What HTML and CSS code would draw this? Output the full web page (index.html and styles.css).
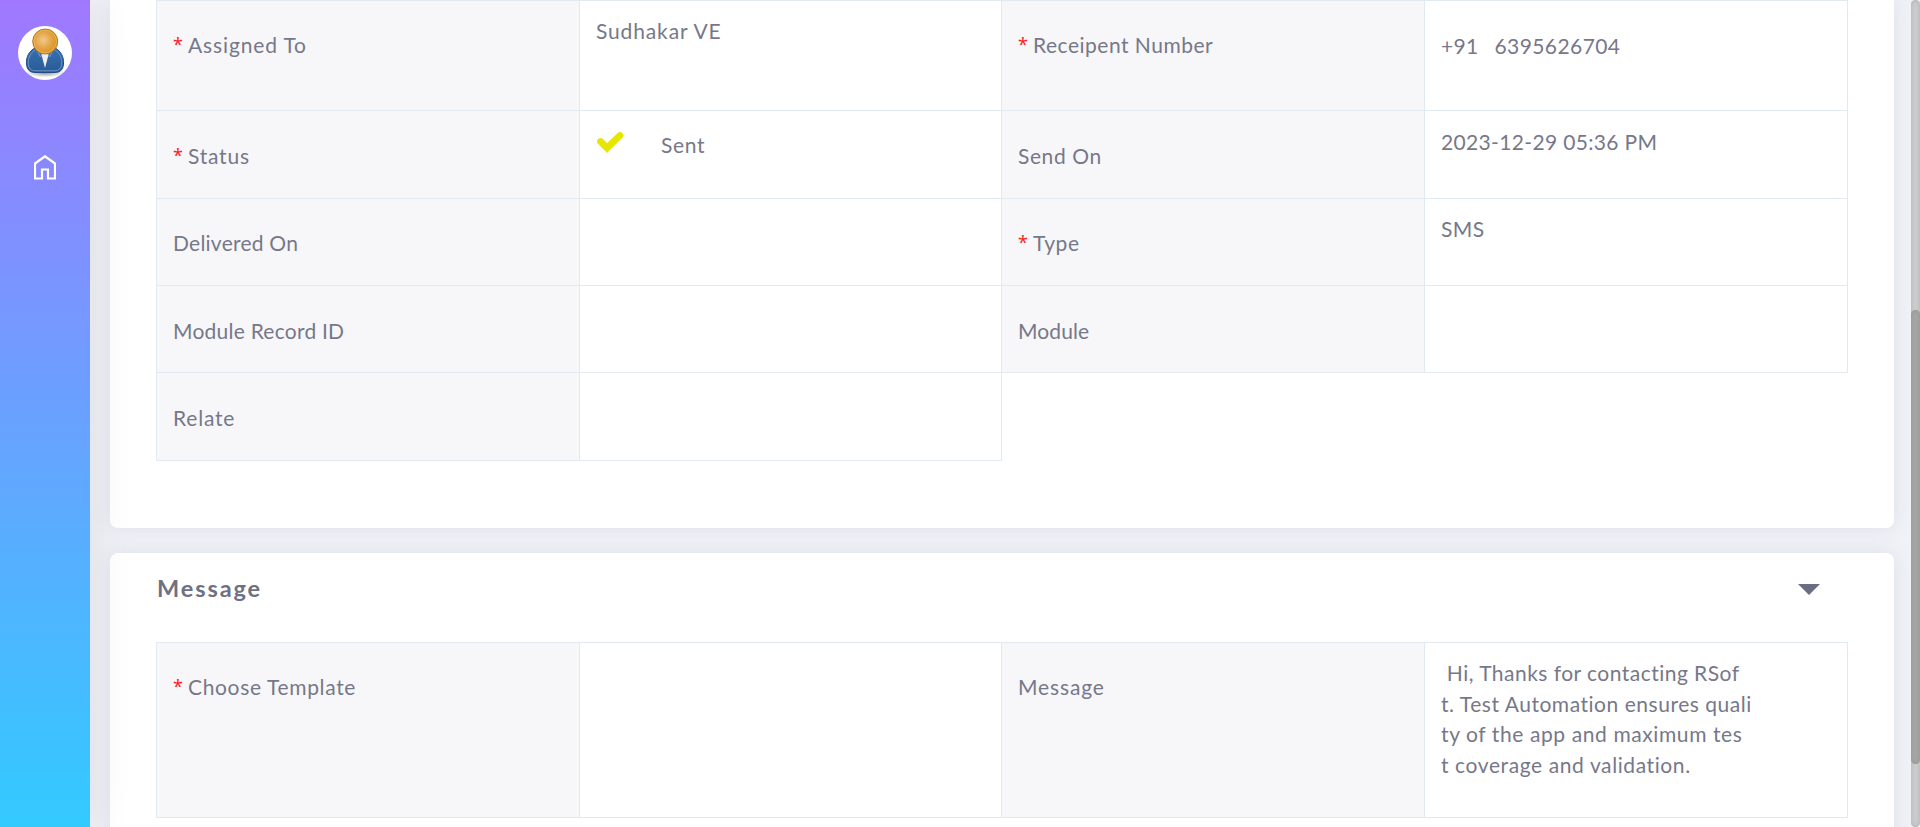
FILE: index.html
```html
<!DOCTYPE html>
<html lang="en">
<head>
<meta charset="utf-8">
<title>SMS details</title>
<link rel="stylesheet" href="styles.css">
</head>
<body>
<div class="app">
  <aside class="sidebar">
    <div class="avatar">
      <svg width="54" height="54" viewBox="0 0 54 54">
        <defs>
          <radialGradient id="head" cx=".42" cy=".45" r=".6"><stop offset="0" stop-color="#f0c88c"/><stop offset=".55" stop-color="#e3a544"/><stop offset="1" stop-color="#d6901d"/></radialGradient>
          <linearGradient id="coat" x1="0" y1="0" x2="0" y2="1"><stop offset="0" stop-color="#3970b0"/><stop offset="1" stop-color="#285b96"/></linearGradient>
          <radialGradient id="shade"><stop offset="0" stop-color="#555" stop-opacity=".7"/><stop offset="1" stop-color="#777" stop-opacity="0"/></radialGradient>
        </defs>
        <ellipse cx="27" cy="46.500" rx="20" ry="5" fill="url(#shade)"/>
        <path d="M17 22C11 25 8 31 8.500 38Q9 46.500 17 46.500H37Q45 46.500 45.500 38C46 31 43 25 37 22Z" fill="url(#coat)" stroke="#204a87" stroke-width="1"/>
        <path d="M17 24C12 27 10 32 10.300 38Q11 44.800 17 44.800H37Q43 44.800 43.700 38C44 32 42 27 37 24" fill="none" stroke="#6c94c4" stroke-width="1"/>
        <path d="M23 27L27 42L31 27Z" fill="#eef0f2"/>
        <path d="M20 26L22.500 31L24 28M34 26L31.500 31L30 28" fill="none" stroke="#7f9dc0"/>
        <circle cx="27.200" cy="15.500" r="12.500" fill="url(#head)" stroke="#b9770c" stroke-width="1"/>
        <circle cx="27.200" cy="15.500" r="11.300" fill="none" stroke="#edb965" stroke-width=".8"/>
      </svg>
    </div>
    <svg class="home" width="22" height="25" viewBox="0 0 22 25"><path d="M1 23.500V8.500L11 1.300L21 8.500V23.500H14V14.500H8V23.500Z" fill="none" stroke="#fff" stroke-width="2.200"/></svg>
  </aside>
  <main class="content">
    <section class="card card-details">
      <div class="fields">
        <div class="label up"><span class="req">*</span><span class="t-assigned">Assigned To</span></div>
        <div class="value up"><span class="t-owner">Sudhakar VE</span></div>
        <div class="label up"><span class="req">*</span><span class="t-number">Receipent Number</span></div>
        <div class="value last phone"><span class="t-code">+91</span><span class="t-phone">6395626704</span></div>

        <div class="label"><span class="req">*</span><span class="t-status">Status</span></div>
        <div class="value sent"><svg width="29" height="22" viewBox="0 0 29 22"><path d="M4.500 10.500L11 17L24 4.500" fill="none" stroke="#e6e600" stroke-width="6.800" stroke-linecap="round"/><path d="M7 14.500L11.200 22L15.500 14.500Z" fill="#e6e600"/></svg><span class="t-sent">Sent</span></div>
        <div class="label"><span class="t-sendon">Send On</span></div>
        <div class="value last"><span class="t-date">2023-12-29 05:36 PM</span></div>

        <div class="label up"><span class="t-delivered">Delivered On</span></div>
        <div class="value"></div>
        <div class="label up"><span class="req">*</span><span class="t-type">Type</span></div>
        <div class="value up last"><span class="t-sms">SMS</span></div>

        <div class="label"><span class="t-record">Module Record ID</span></div>
        <div class="value"></div>
        <div class="label"><span class="t-module">Module</span></div>
        <div class="value last"></div>

        <div class="label"><span class="t-relate">Relate</span></div>
        <div class="value last lone"></div>
      </div>
    </section>
    <section class="card card-message">
      <header class="card-head"><h2>Message</h2><span class="caret"></span></header>
      <div class="fields message-fields">
        <div class="label up"><span class="req">*</span><span class="t-template">Choose Template</span></div>
        <div class="value"></div>
        <div class="label up"><span class="t-message">Message</span></div>
        <div class="value up last message"><span class="t-m1"> Hi, Thanks for contacting RSof</span><span class="t-m2">t. Test Automation ensures quali</span><span class="t-m3">ty of the app and maximum tes</span><span class="t-m4">t coverage and validation.</span></div>
      </div>
    </section>
  </main>
  <div class="scroll"><div class="thumb"></div></div>
</div>
</body>
</html>
```
FILE: styles.css
```css
* { box-sizing: border-box; }
body {
  margin: 0;
  height: 827px;
  overflow: hidden;
  background: #f0f2f7;
  color: #767889;
  font: 21px/30px Lato, "Open Sans", sans-serif;
  font-variant-ligatures: none;
}
.app { display: flex; height: 827px; overflow: hidden; }
.sidebar {
  position: relative;
  z-index: 1;
  width: 90px;
  flex: none;
  padding-top: 26px;
  display: flex;
  flex-direction: column;
  align-items: center;
  background: linear-gradient(#a078ff, #32caff);
  box-shadow: 0 0 45px rgba(0, 0, 0, .09);
}
.avatar { width: 54px; height: 54px; border-radius: 50%; background: #fff; overflow: hidden; }
.avatar svg { display: block; }
.home { margin-top: 75px; }
.content { width: 1821px; flex: none; padding: 0 17px 0 20px; }
.card {
  background: #fff;
  padding: 0 46px;
  box-shadow: 0 0 20px rgba(100, 100, 160, .12);
}
.card-details { height: 528px; border-radius: 0 0 8px 8px; }
.card-message { height: 300px; margin-top: 25px; border-radius: 8px 8px 0 0; }
.fields {
  display: grid;
  grid-template-columns: 423px 422px 423px 424px;
  grid-template-rows: 110px 88px 87px 87px 88px;
  border-top: 1px solid #e1e9f2;
}
.message-fields { grid-template-rows: 175px; }
.label, .value {
  border-left: 1px solid #e1e9f2;
  border-bottom: 1px solid #e1e9f2;
  padding-left: 16px;
  white-space: pre;
  display: flex;
  align-items: flex-start;
}
.label { background: #f7f7fa; padding-top: 30px; }
.value { padding-top: 16px; }
.label.up { padding-top: 29px; }
.value.up { padding-top: 15px; }
.last { border-right: 1px solid #e1e9f2; }
.lone { margin-right: -1px; }
.req { color: #ff1e1e; width: 15px; flex: none; margin-top: -1px; font-family: "Noto Sans", sans-serif; font-size: 18px; }
.phone { padding-top: 30px; gap: 16px; }
.sent { padding-top: 19px; gap: 36px; }
.sent svg { margin-top: 1px; }
.card-head { height: 89px; padding: 19px 28px 0 0; display: flex; justify-content: space-between; align-items: flex-start; }
h2 { margin: 0; padding-left: 1px; font-size: 23.500px; line-height: 32px; font-weight: 700; letter-spacing: 1.900px; color: #6e7083; }
.caret { margin-top: 12px; border: 11px solid transparent; border-top-color: #6b6d80; border-bottom: 0; }
.message { flex-direction: column; line-height: 30.6px; }
.scroll { width: 9px; height: 827px; flex: none; border-radius: 5px; background: #cdcdd0; box-shadow: inset 0 0 5px #b0b0b0; padding-top: 310px; }
.thumb { height: 454px; border-radius: 5px; background: #a5a5a6; box-shadow: inset 0 0 4px #969696; }

.t-assigned, .t-owner, .t-message { letter-spacing: .86px; }
.t-number { letter-spacing: .5px; }
.t-code { letter-spacing: .3px; }
.t-phone { letter-spacing: .42px; }
.t-status { letter-spacing: .78px; }
.t-sent, .t-template { letter-spacing: .65px; }
.t-sendon, .t-type, .t-m3, .t-m4 { letter-spacing: .6px; }
.t-date { letter-spacing: .34px; }
.t-delivered, .t-record { letter-spacing: .24px; }
.t-sms, .t-m1 { letter-spacing: .47px; }
.t-module { letter-spacing: .1px; }
.t-relate { letter-spacing: .8px; }
.t-m2 { letter-spacing: .53px; }
```
